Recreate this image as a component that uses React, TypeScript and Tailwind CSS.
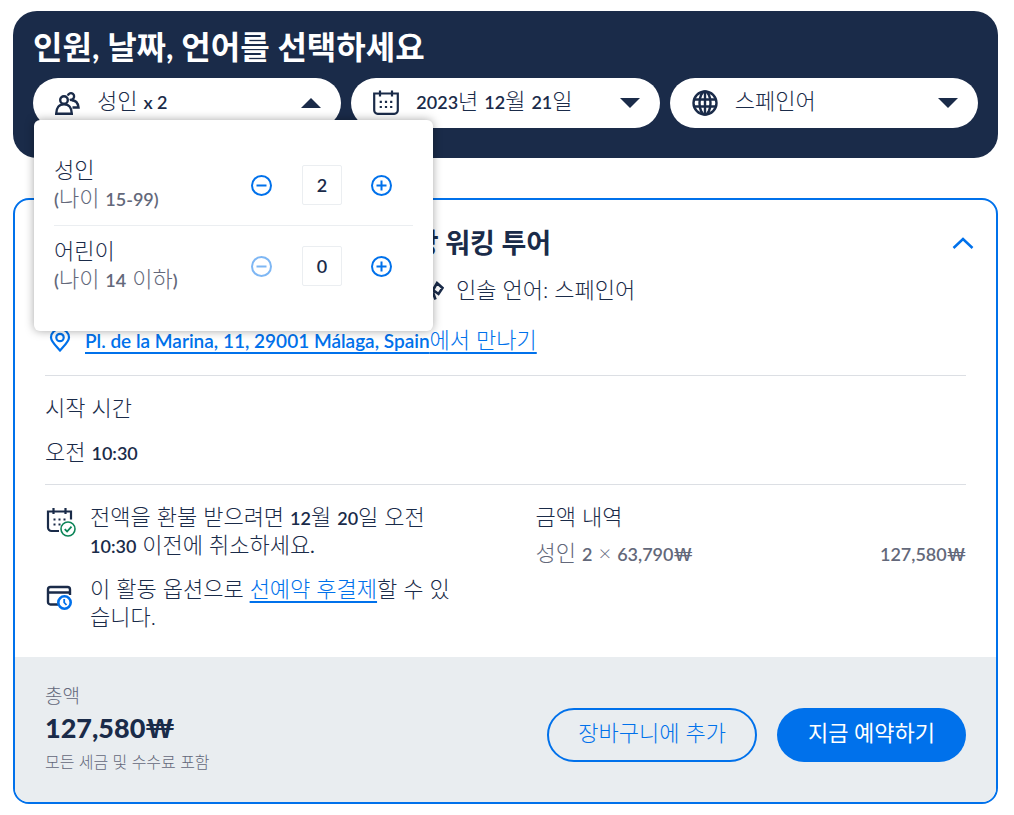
import { useState } from 'react'
import type { ReactNode } from 'react'
import clsx from 'clsx'

// Latin letters, digits and brackets are set smaller and heavier than the Hangul around them
function Mixed({ text, className = 'text-lg' }: { text: string; className?: string }) {
  const parts = text.split(/([\w₩á().,:-]+(?: [\w₩á().,:-]+)*)/)
  return (
    <>
      {parts.map((part, i) =>
        i % 2 === 1 ? (
          <span key={i} className={clsx('leading-none font-semibold', className)}>
            {part}
          </span>
        ) : (
          part
        )
      )}
    </>
  )
}

function PeopleIcon() {
  return (
    <svg className="size-[26px] shrink-0" viewBox="0 0 26 26" fill="none" stroke="currentColor" strokeWidth="2.4">
      <circle cx="10" cy="10" r="3.8" />
      <path d="M2.200 23.800c0-6 3-9.600 7.800-9.600s7.800 3.600 7.800 9.600z" />
      <path d="M13.800 5.600a3.200 3.200 0 1 1 4.400 3.700l-2.500.9M17.500 10.200c3.800 0 6.500 2.600 7 7.300h-6" />
    </svg>
  )
}

function CalendarIcon() {
  return (
    <svg className="ml-px size-[26px] shrink-0" viewBox="0 0 26 26" fill="none" stroke="currentColor" strokeWidth="2.200">
      <path d="M1.200 3.500h23.600v16.800a3.500 3.500 0 0 1-3.500 3.500H4.700a3.500 3.500 0 0 1-3.500-3.500zM7 .5v6M19 .5v6" />
      <path d="M6.700 11.800h2.200M11.900 11.800h2.200M17.100 11.800h2.200M6.700 17h2.200M11.900 17h2.200M17.100 17h2.200" />
    </svg>
  )
}

function GlobeIcon() {
  return (
    <svg className="ml-px size-[26px] shrink-0" viewBox="0 0 26 26" fill="none" stroke="currentColor" strokeWidth="2.4">
      <circle cx="13" cy="13" r="11.500" />
      <ellipse cx="13" cy="13" rx="5.500" ry="11.500" />
      <path d="M13 1.500v23M2.500 9.500h21M2.500 16.500h21" />
    </svg>
  )
}

function Triangle({ up }: { up?: boolean }) {
  return (
    <svg className="h-2.5 w-5 shrink-0" viewBox="0 0 20 10" fill="currentColor">
      <path d={up ? 'M0 10 10 0l10 10z' : 'M0 0h20L10 10z'} />
    </svg>
  )
}

function CircleIcon({ plus }: { plus?: boolean }) {
  return (
    <svg className="size-[22px]" viewBox="0 0 22 22" fill="none" stroke="currentColor" strokeWidth="2">
      <circle cx="10.500" cy="11.500" r="9.500" />
      <path d={plus ? 'M5.500 11.500h10M10.500 6.500v10' : 'M5.500 11.500h10'} />
    </svg>
  )
}

function ClockIcon() {
  return (
    <svg className="size-6 shrink-0" viewBox="0 0 24 24" fill="none" stroke="currentColor" strokeWidth="2">
      <circle cx="12" cy="12" r="10" />
      <path d="M12 6v7l4 3" />
    </svg>
  )
}

function GuideIcon() {
  return (
    <svg className="size-6 shrink-0" viewBox="0 0 24 24" fill="none" stroke="currentColor" strokeWidth="2.600">
      <circle cx="6" cy="8" r="3.500" />
      <path d="M1 22c0-6 2-8 5-8 3 0 5 2 6 5M17 5l5.500 5-4 6-5.500-4zM13 12l-4 8M13 14.500l2.500 7" />
    </svg>
  )
}

function PinIcon() {
  return (
    <svg className="h-6 w-[22px] shrink-0" viewBox="0 0 22 24" fill="none" stroke="currentColor" strokeWidth="2.2">
      <path d="M11 22.500C7 18 2 13.500 2 9.500a9 8.500 0 0 1 18 0C20 13.500 15 18 11 22.500z" />
      <circle cx="11" cy="9.500" r="3.700" />
    </svg>
  )
}

function CancelIcon() {
  return (
    <svg className="mt-1 size-[30px] shrink-0" viewBox="0 0 30 30" fill="none" stroke="currentColor" strokeWidth="2.200">
      <path d="M13 24H5.500A3.500 3.500 0 0 1 2 20.500V4.500h23v8M7.500 1v6M19.500 1v6" />
      <path d="M7.500 12.500h2M12.500 12.500h2M17.500 12.500h2M7.500 17.500h2M12.500 17.500h2" />
      <g stroke="#0b8457">
        <circle cx="22" cy="22" r="7" fill="#fff" strokeWidth="1.600" />
        <path d="m18.700 22.100 2.400 2.400 4.400-4.800" strokeWidth="1.800" />
      </g>
    </svg>
  )
}

function PayLaterIcon() {
  return (
    <svg className="mt-2 size-[30px] shrink-0" viewBox="0 0 30 30" fill="none" stroke="currentColor" strokeWidth="2.400">
      <path d="M12 21.500H4.500A2.500 2.500 0 0 1 2 19V6.500A2.500 2.500 0 0 1 4.500 4h17A2.500 2.500 0 0 1 24 6.500V12M2 9.500h22" />
      <g stroke="#0071eb">
        <circle cx="18.500" cy="19.500" r="6.200" fill="#fff" strokeWidth="2.600" />
        <path d="M18.200 16v3.500l2.300 2.500" strokeWidth="1.800" />
      </g>
    </svg>
  )
}

interface CounterRowProps {
  id: string
  label: string
  hint: string
  value: number
  onChange: (value: number) => void
  className?: string
}

function CounterRow({ id, label, hint, value, onChange, className }: CounterRowProps) {
  return (
    <div className={clsx('flex items-center justify-between', className)}>
      <label htmlFor={id} className="pb-[3px] leading-7">
        <span className="block">{label}</span>
        <span className="block text-[#63687a]">
          <Mixed text={hint} />
        </span>
      </label>
      <div className="mr-5 flex items-center gap-[29px]">
        <button
          type="button"
          aria-label={`${label} 줄이기`}
          disabled={value === 0}
          onClick={() => onChange(value - 1)}
          className="text-[#0071eb] disabled:opacity-50"
        >
          <CircleIcon />
        </button>
        <input
          id={id}
          type="text"
          value={value}
          readOnly
          className="size-10 rounded-xs border border-[#ebeef1] text-center text-lg font-semibold outline-none"
        />
        <button
          type="button"
          aria-label={`${label} 늘리기`}
          onClick={() => onChange(value + 1)}
          className="text-[#0071eb]"
        >
          <CircleIcon plus />
        </button>
      </div>
    </div>
  )
}

function Benefit({ icon, children }: { icon: ReactNode; children: ReactNode }) {
  return (
    <li className="flex items-start gap-[14px] pr-4 pl-px">
      {icon}
      <p>{children}</p>
    </li>
  )
}

const pill = 'flex h-[50px] items-center rounded-full bg-white pr-5 pl-[21px] text-left'
const pillText = 'ml-[17px] flex-1 pb-1'

export default function App() {
  const [adults, setAdults] = useState(2)
  const [children, setChildren] = useState(0)

  return (
    <main className="bg-white py-[11px] pr-4 pl-[13px] font-['Lato','Noto_Sans_CJK_KR',sans-serif] text-[22px] leading-7 font-light text-[#1a2b49]">
      <section className="rounded-3xl bg-[#1a2b49] px-5 pt-4 pb-[30px]">
        <h2 className="mb-[11px] text-[32px] leading-10 font-bold text-white">인원, 날짜, 언어를 선택하세요</h2>
        <div className="grid grid-cols-3 gap-2.5">
          <div className="relative">
            <button type="button" aria-expanded="true" className={clsx(pill, 'w-full')}>
              <PeopleIcon />
              <span className={pillText}>
                <Mixed text={`성인 x ${adults}`} />
              </span>
              <Triangle up />
            </button>
            <div className="absolute top-[42px] left-px z-10 w-[399px] rounded-md bg-white px-5 py-[25px] shadow-[0_0_10px_rgba(0,0,0,0.35)]">
              <CounterRow
                id="adults"
                label="성인"
                hint="(나이 15-99)"
                value={adults}
                onChange={setAdults}
                className="h-[81px] border-b border-[#ebeef1]"
              />
              <CounterRow
                id="children"
                label="어린이"
                hint="(나이 14 이하)"
                value={children}
                onChange={setChildren}
                className="h-20"
              />
            </div>
          </div>
          <button type="button" className={pill}>
            <CalendarIcon />
            <span className={pillText}>
              <Mixed text="2023년 12월 21일" />
            </span>
            <Triangle />
          </button>
          <div className={pill}>
            <GlobeIcon />
            <select aria-label="언어" className={clsx(pillText, 'appearance-none bg-transparent outline-none')}>
              <option>스페인어</option>
              <option>영어</option>
            </select>
            <Triangle />
          </div>
        </div>
      </section>

      <article className="mt-10 overflow-hidden rounded-2xl border-2 border-[#0071eb]">
        <div className="px-[30px] pt-[25px] pb-[26px]">
          <div className="flex items-center justify-between">
            <h3 className="text-[27px] leading-9 font-bold">말라가: 구시가, 알카사바, 로마 극장 워킹 투어</h3>
            <button type="button" aria-label="접기" className="-mr-3 px-1 text-[#0071eb]">
              <svg className="h-3 w-[22px]" viewBox="0 0 22 12" fill="none" stroke="currentColor" strokeWidth="2.500">
                <path d="m1.500 11 9.500-9 9.500 9" />
              </svg>
            </button>
          </div>
          <div className="mt-[15px] flex items-center">
            <span className="flex w-[375px] items-center gap-3">
              <ClockIcon />
              <span>
                <Mixed text="소요 시간: 2시간" />
              </span>
            </span>
            <span className="flex items-center gap-3">
              <GuideIcon />
              인솔 언어: 스페인어
            </span>
          </div>
          <a href="#meeting-point" className="mt-[22px] flex items-center gap-[14px] pl-1 text-[#0071eb]">
            <PinIcon />
            <span className="underline decoration-2 underline-offset-4">
              <Mixed text="Pl. de la Marina, 11, 29001 Málaga, Spain에서 만나기" className="text-[19px]" />
            </span>
          </a>

          <div className="mt-[21px] border-y border-[#dcdfe4] py-[18px]">
            <h4>시작 시간</h4>
            <p className="mt-4">
              <Mixed text="오전 10:30" />
            </p>
          </div>

          <div className="grid grid-cols-2 gap-[60px] pt-[18px]">
            <ul className="flex flex-col gap-4">
              <Benefit icon={<CancelIcon />}>
                <Mixed text="전액을 환불 받으려면 12월 20일 오전 10:30 이전에 취소하세요." />
              </Benefit>
              <Benefit icon={<PayLaterIcon />}>
                이 활동 옵션으로{' '}
                <a href="#pay-later" className="text-[#0071eb] underline decoration-2 underline-offset-4">
                  선예약 후결제
                </a>
                할 수 있습니다.
              </Benefit>
            </ul>
            <div>
              <h4>금액 내역</h4>
              <p className="mt-2 flex justify-between text-[#63687a]">
                <span>
                  <Mixed text="성인 2 × 63,790₩" />
                </span>
                <span>
                  <Mixed text="127,580₩" />
                </span>
              </p>
            </div>
          </div>
        </div>

        <footer className="flex items-center justify-between bg-[#e9edf0] px-[30px] pt-[27px] pb-[26px]">
          <div className="text-[#63687a]">
            <p className="text-[19px] leading-6">총액</p>
            <p className="text-[27px] leading-10 font-black text-[#1a2b49]">127,580₩</p>
            <p className="text-base leading-7">모든 세금 및 수수료 포함</p>
          </div>
          <div className="flex gap-5 pt-[10px]">
            <button
              type="button"
              className="h-[54px] rounded-full border-2 border-[#0071eb] px-[29px] pb-1 text-[#0071eb]"
            >
              장바구니에 추가
            </button>
            <button type="button" className="h-[54px] rounded-full bg-[#0071eb] px-[31px] pb-1 font-normal text-white">
              지금 예약하기
            </button>
          </div>
        </footer>
      </article>
    </main>
  )
}
